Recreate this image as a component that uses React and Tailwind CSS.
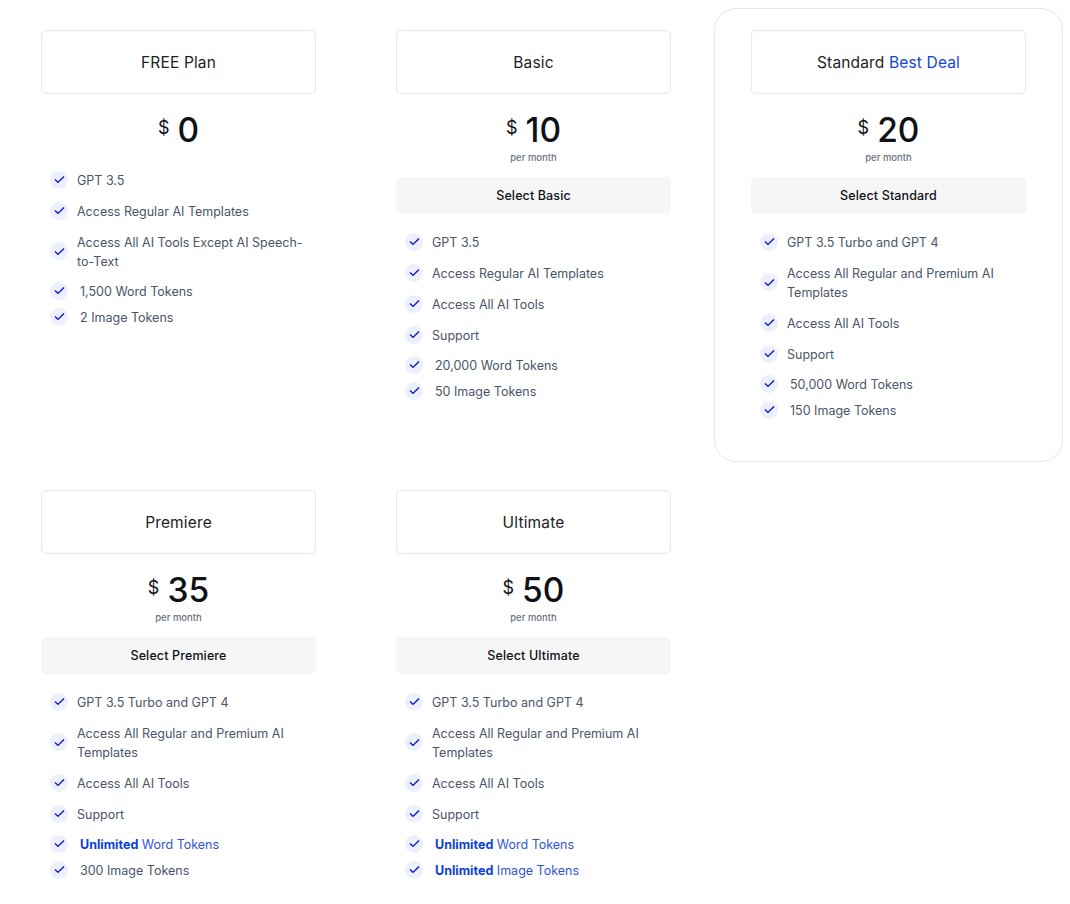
import React from 'react';

const plans = [
  {
    name: 'FREE Plan',
    price: '0',
    features: ['GPT 3.5', 'Access Regular AI Templates', 'Access All AI Tools Except AI Speech-to-Text'],
    words: '1,500',
    images: '2',
    free: true,
  },
  {
    name: 'Basic',
    price: '10',
    features: ['GPT 3.5', 'Access Regular AI Templates', 'Access All AI Tools', 'Support'],
    words: '20,000',
    images: '50',
  },
  {
    name: 'Standard',
    price: '20',
    deal: true,
    features: ['GPT 3.5 Turbo and GPT 4', 'Access All Regular and Premium AI Templates', 'Access All AI Tools', 'Support'],
    words: '50,000',
    images: '150',
  },
  {
    name: 'Premiere',
    price: '35',
    features: ['GPT 3.5 Turbo and GPT 4', 'Access All Regular and Premium AI Templates', 'Access All AI Tools', 'Support'],
    words: 'Unlimited',
    images: '300',
  },
  {
    name: 'Ultimate',
    price: '50',
    features: ['GPT 3.5 Turbo and GPT 4', 'Access All Regular and Premium AI Templates', 'Access All AI Tools', 'Support'],
    words: 'Unlimited',
    images: 'Unlimited',
  },
];

function Check() {
  return (
    <span className="flex h-[18px] w-[18px] shrink-0 items-center justify-center rounded-full bg-[#ebf0fc]">
      <svg width="11" height="9" viewBox="0 0 11 9" fill="none">
        <path d="M1 4.6 4 7.4 10 1.4" stroke="#1210cc" strokeWidth="1.4" />
      </svg>
    </span>
  );
}

function Tokens({ value, label }) {
  const unlimited = value === 'Unlimited';
  return (
    <li className="-mt-[1px] flex items-center gap-[12px]">
      <Check />
      <span className={`translate-y-[1px] ${unlimited ? 'text-[#2f55d4]' : ''}`}>
        <span className={unlimited ? 'font-bold text-[#0b3fd6]' : ''}>{value}</span> {label}
      </span>
    </li>
  );
}

function PlanCard({ plan }) {
  return (
    <div className={`h-[454px] rounded-[22px] border px-[36px] pt-[21px] ${plan.deal ? 'border-[#e5e7eb]' : 'border-transparent'}`}>
      <div className="flex h-[64px] items-center justify-center rounded-[5px] border border-[#e5e7eb] text-[15.5px] font-[420] tracking-[0.01em] text-[#1f2126]">
        <span className="translate-y-[1px]">
          {plan.name}
          {plan.deal && <span className="text-[#0f45d9]"> Best Deal</span>}
        </span>
      </div>
      <div className="mt-[19px] flex h-[36px] items-center justify-center text-[#0f1117]">
        <span className="mb-[6px] mr-[8px] text-[18px] leading-none">$</span>
        <span className="text-[33.5px] font-medium leading-none">{plan.price}</span>
      </div>
      {plan.free ? (
        <div className="h-[3px]" />
      ) : (
        <>
          <div className="mt-[2px] text-center text-[9.5px] font-medium leading-[14px] text-[#6b7280]">per month</div>
          <button className="mt-[12px] h-[37px] w-full rounded-[5px] bg-[#f6f6f6] pt-[2px] text-[12.5px] font-medium tracking-[0.01em] text-[#0f1117]">
            Select {plan.name}
          </button>
        </>
      )}
      <ul className="mt-[18px] flex flex-col gap-[12px] px-[9px] text-[12.5px] leading-[19px] text-[#4a5568]">
        {plan.features.map((f) => (
          <li key={f} className="flex items-center gap-[9px]">
            <Check />
            <span className="translate-y-[1px]">{f}</span>
          </li>
        ))}
        <Tokens value={plan.words} label="Word Tokens" />
        <div className="-mt-[4px]">
          <Tokens value={plan.images} label="Image Tokens" />
        </div>
      </ul>
    </div>
  );
}

export default function App() {
  return (
    <div className="min-h-screen bg-white font-['Inter',sans-serif]">
      <div className="grid grid-cols-[349px_349px_349px] gap-x-[6px] gap-y-[6px] pl-[4px] pt-[8px]">
        {plans.map((plan) => (
          <PlanCard key={plan.name} plan={plan} />
        ))}
      </div>
    </div>
  );
}
